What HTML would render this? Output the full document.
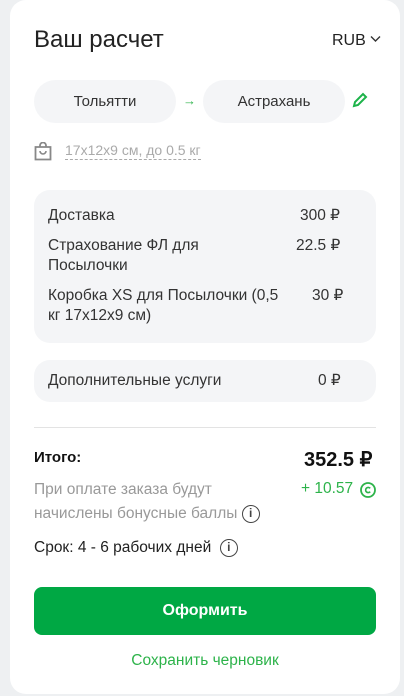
<!DOCTYPE html>
<html><head><meta charset="utf-8"><style>
*{margin:0;padding:0;box-sizing:border-box}
body{width:404px;height:696px;background:#eef0f2;font-family:"Liberation Sans",sans-serif;color:#222;position:relative;overflow:hidden}
.card{position:absolute;left:10px;top:0;width:390px;height:694px;background:#fff;border-radius:16px}
.a{position:absolute;white-space:nowrap}
.pill{position:absolute;top:80px;height:43px;width:142px;border-radius:22px;background:#f4f5f7;font-size:15px;display:flex;align-items:center;justify-content:center;color:#333}
.box{position:absolute;left:34px;width:342px;background:#f4f5f7;border-radius:16px}
.t{font-size:15.5px;color:#333;line-height:20px}
.info{display:inline-block;width:18px;height:18px;border:1.6px solid #444;border-radius:50%;font-size:12px;text-align:center;line-height:15px;font-weight:bold;color:#444;vertical-align:middle}
</style></head><body>
<div class="card"></div>
<div class="a" style="left:34px;top:26px;font-size:24px;color:#222">Ваш расчет</div>
<div class="a" style="left:332px;top:32px;font-size:16px;color:#222">RUB <svg width="11" height="8" viewBox="0 0 11 8" style="vertical-align:2px"><path d="M1 1.5l4.5 4.5 4.5-4.5" stroke="#333" stroke-width="1.4" fill="none"/></svg></div>
<div class="pill" style="left:34px">Тольятти</div>
<div class="a" style="left:183px;top:93px;color:#2db34a;font-size:13px">→</div>
<div class="pill" style="left:203px">Астрахань</div>
<svg class="a" style="left:352px;top:92px" width="16" height="16" viewBox="0 0 16 16"><path d="M2 14l1-4 8-8 3 3-8 8z" fill="none" stroke="#1db34a" stroke-width="2"/></svg>
<svg class="a" style="left:34px;top:142px" width="18" height="19" viewBox="0 0 18 19"><path d="M6 5V3.5a3 3 0 016 0V5M1.5 5h15v12.5h-15z" fill="none" stroke="#888" stroke-width="1.8"/><path d="M6 9a3 3 0 006 0" fill="none" stroke="#888" stroke-width="1.6"/></svg>
<div class="a" style="left:65px;top:142px;font-size:14px;color:#aaa;border-bottom:1px dashed #aaa;line-height:17px">17x12x9 см, до 0.5 кг</div>
<div class="box" style="top:190px;height:153px"></div>
<div class="a t" style="left:48px;top:206px">Доставка</div>
<div class="a t" style="left:300px;top:206px">300 ₽</div>
<div class="a t" style="left:48px;top:236px">Страхование ФЛ для<br>Посылочки</div>
<div class="a t" style="left:296px;top:236px">22.5 ₽</div>
<div class="a t" style="left:48px;top:286px">Коробка XS для Посылочки (0,5<br>кг 17x12x9 см)</div>
<div class="a t" style="left:312px;top:286px">30 ₽</div>
<div class="box" style="top:360px;height:42px"></div>
<div class="a t" style="left:48px;top:371px">Дополнительные услуги</div>
<div class="a t" style="left:318px;top:371px">0 ₽</div>
<div class="a" style="left:34px;top:427px;width:342px;height:1px;background:#e3e3e3"></div>
<div class="a" style="left:34px;top:449px;font-size:15px;font-weight:bold;color:#111">Итого:</div>
<div class="a" style="left:304px;top:447px;font-size:20px;font-weight:bold;color:#111">352.5 ₽</div>
<div class="a" style="left:34px;top:478px;font-size:15.5px;color:#999;line-height:24px">При оплате заказа будут<br>начислены бонусные баллы <span class="info">i</span></div>
<div class="a" style="left:301px;top:480px;font-size:15.5px;color:#2db34a">+ 10.57</div>
<svg class="a" style="left:360px;top:482px" width="16" height="16" viewBox="0 0 16 16"><circle cx="8" cy="8" r="7" fill="none" stroke="#2db34a" stroke-width="1.8"/><path d="M10.2 6.3a2.6 2.6 0 100 3.4" fill="none" stroke="#2db34a" stroke-width="1.6"/></svg>
<div class="a" style="left:34px;top:539px;font-size:15.5px;color:#222">Срок: 4 - 6 рабочих дней &nbsp;<span class="info">i</span></div>
<div class="a" style="left:34px;top:587px;width:342px;height:48px;background:#00a844;border-radius:8px;color:#fff;font-weight:bold;font-size:16px;display:flex;align-items:center;justify-content:center">Оформить</div>
<div class="a" style="left:0;width:410px;text-align:center;top:652px;font-size:15.5px;color:#2db34a">Сохранить черновик</div>
</body></html>
